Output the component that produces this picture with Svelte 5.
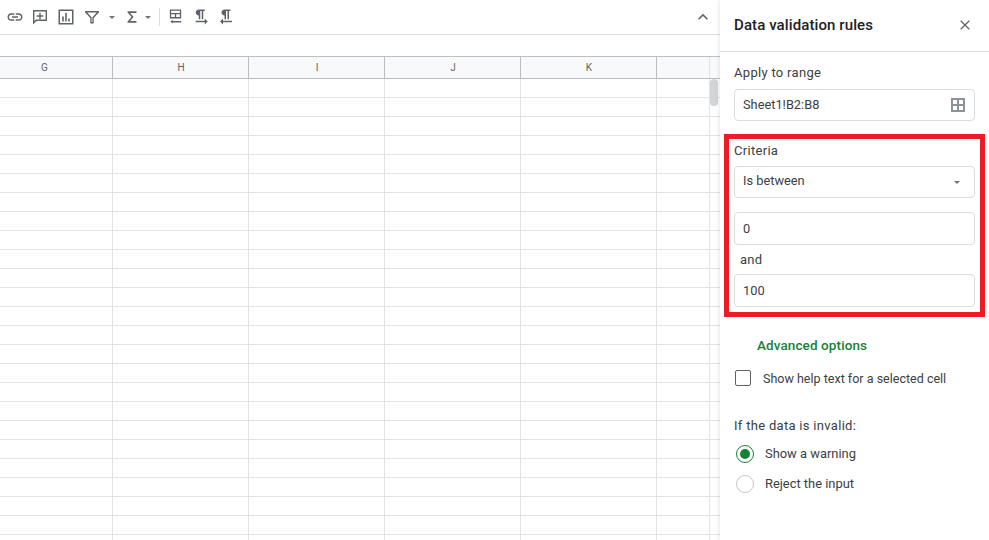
<script lang="ts">
  const columns = ['G', 'H', 'I', 'J', 'K', ''];
  const rowCount = 25;
</script>

<div class="page">
  <div class="sheet">
    <div class="toolbar">
      <svg class="ic link" viewBox="0 0 24 24"><path d="M3.9 12c0-1.71 1.39-3.1 3.1-3.1h4V7H7c-2.76 0-5 2.24-5 5s2.24 5 5 5h4v-1.9H7c-1.71 0-3.1-1.39-3.1-3.1zM8 13h8v-2H8v2zm9-6h-4v1.9h4c1.71 0 3.1 1.39 3.1 3.1s-1.39 3.1-3.1 3.1h-4V17h4c2.76 0 5-2.24 5-5s-2.24-5-5-5z"/></svg>
      <svg class="ic comment" viewBox="0 0 18 18"><path d="M2 2h14v11H5.5L2 16.5zM3.4 3.4v9.7l1.5-1.5h9.7V3.4z"/><path d="M8.3 4.8h1.4v2.5h2.5v1.4H9.7v2.5H8.3V8.700H5.800V7.300h2.500z"/></svg>
      <svg class="ic chart" viewBox="0 0 18 18"><path d="M1.500 1.500h15v15h-15zM3 3v12h12V3z"/><path d="M5.200 8.500h1.600v5H5.200zM8.200 5h1.600v8.500H8.200zM11.200 10.500h1.600v3h-1.600z"/></svg>
      <svg class="ic filter" viewBox="0 0 18 18"><path d="M2 3h14v1.300L10.700 10v5.500H7.300V10L2 4.300zM4.300 4.400l4.300 4.900v4.800h.8V9.300l4.300-4.900z"/></svg>
      <span class="caret first"></span>
      <svg class="ic sigma" viewBox="0 0 18 18"><path d="M4 2.500h10v2H6.900L10.800 9l-3.900 4.500H14v2H4v-1.400L8.500 9 4 3.900z"/></svg>
      <span class="caret second"></span>
      <span class="sep"></span>
      <svg class="ic freeze" viewBox="0 0 18 18"><path d="M3 1h12v9.500H3zM4.400 2.400v2.300h9.200V2.400zm0 3.600v3.100h3.900V6zm5.300 0v3.100h3.900V6z"/><path d="M6 12v1.300h9v1.400H6V16l-2.500-2.300z"/></svg>
      <svg class="ic ltr" viewBox="0 0 24 24"><path d="M9 10v5h2V4h2v11h2V4h2V2H9C6.790 2 5 3.790 5 6s1.790 4 4 4zm12 8l-4-4v3H5v2h12v3l4-4z"/></svg>
      <svg class="ic rtl" viewBox="0 0 24 24"><path d="M10 10v5h2V4h2v11h2V4h2V2h-8C7.790 2 6 3.790 6 6s1.790 4 4 4zm-2 7v-3l-4 4 4 4v-3h12v-2H8z"/></svg>
      <svg class="ic collapse" viewBox="0 0 24 24"><path d="M7.400 15.400 12 10.800l4.600 4.600L18 14l-6-6-6 6z"/></svg>
    </div>
    <div class="formula"></div>
    <div class="grid">
      <div class="head">
        {#each columns as c}
          <div class="hcell">{c}</div>
        {/each}
      </div>
      {#each Array(rowCount) as _}
        <div class="row">
          {#each columns as c}
            <div class="cell" data-col={c}></div>
          {/each}
        </div>
      {/each}
      <div class="thumb"></div>
    </div>
  </div>

  <aside class="panel">
    <header>
      <h2>Data validation rules</h2>
      <svg class="close" viewBox="0 0 14 14"><path d="M2 2l10 10M12 2 2 12"/></svg>
    </header>

    <div class="body">
      <div class="apply">
        <div class="label">Apply to range</div>
        <div class="field range">
          <span>Sheet1!B2:B8</span>
          <svg class="table" viewBox="0 0 16 14"><path d="M1 0h14v14H1zM3 2v4h4V2zm6 0v4h4V2zM3 8v4h4V8zm6 0v4h4V8z"/></svg>
        </div>
      </div>

      <section class="criteria">
        <div class="label">Criteria</div>
        <div class="field select">
          <span>Is between</span>
          <span class="caret small"></span>
        </div>
        <div class="field value">0</div>
        <div class="and">and</div>
        <div class="field value last">100</div>
      </section>

      <div class="advanced">Advanced options</div>

      <div class="check">
        <span class="box"></span>
        <span>Show help text for a selected cell</span>
      </div>

      <div class="label invalid">If the data is invalid:</div>
      <div class="radio first">
        <span class="dot on"></span>
        <span class="text">Show a warning</span>
      </div>
      <div class="radio">
        <span class="dot"></span>
        <span class="text">Reject the input</span>
      </div>
    </div>
  </aside>
</div>

<style>
  :global(body) { margin: 0; background: #fff; }
  .page { display: flex; width: 989px; height: 540px; overflow: hidden; font-family: Roboto, "Liberation Sans", sans-serif; color: #3c4043; }

  .sheet { width: 720px; flex: none; display: flex; flex-direction: column; overflow: hidden; }

  .toolbar { position: relative; height: 34px; flex: none; display: flex; align-items: center; border-bottom: 1px solid #dadce0; box-sizing: content-box; }
  .ic { width: 18px; height: 18px; flex: none; fill: #5f6368; }
  .link { margin-left: 6px; }
  .comment { margin-left: 7px; }
  .chart { margin-left: 8px; }
  .filter { margin-left: 8px; }
  .sigma { margin-left: 9px; width: 16px; height: 18px; }
  .caret { width: 0; height: 0; border-left: 3.500px solid transparent; border-right: 3.500px solid transparent; border-top: 3.500px solid #70757a; flex: none; }
  .caret.first { margin-left: 8px; }
  .caret.second { margin-left: 5px; }
  .sep { width: 1px; height: 18px; background: #dadce0; margin-left: 8px; flex: none; }
  .freeze { margin-left: 7px; width: 17px; }
  .ltr { margin-left: 8px; }
  .rtl { margin-left: 7px; }
  .collapse { margin-left: auto; margin-right: 7px; width: 20px; height: 20px; }

  .formula { height: 21px; flex: none; }

  .grid { position: relative; flex: 1; border-top: 1px solid #c0c0c0; }
  .head, .row { display: flex; }
  .head { height: 22px; background: #f8f9fa; border-bottom: 1px solid #bdbdbd; box-sizing: border-box; }
  .row { height: 19px; border-bottom: 1px solid #e2e3e3; box-sizing: border-box; }
  .hcell, .cell { width: 136px; flex: none; box-sizing: border-box; }
  .hcell:first-child, .cell:first-child { width: 113px; }
  .hcell:first-child { padding-right: 23px; }
  .hcell:not(:first-child) { padding-left: 1px; }
  .hcell:last-child, .cell:last-child { width: 53px; border-right: 1px solid #e2e3e3; }
  .hcell { border-right: 1px solid #bdbdbd; font-size: 10px; line-height: 21px; text-align: center; color: #5f6368; }
  .cell { border-right: 1px solid #e2e3e3; }
  .thumb { position: absolute; left: 710px; top: 22px; width: 8px; height: 27px; border-radius: 4px; background: #d2d4d7; }

  .panel { width: 269px; flex: none; box-shadow: 0 0 5px rgba(60, 64, 67, 0.18); background: #fff; position: relative; }
  header { height: 50px; display: flex; align-items: center; justify-content: space-between; padding: 0 18px 1px 14px; border-bottom: 1px solid #dadce0; box-sizing: content-box; }
  h2 { margin: 0; font-size: 15px; font-weight: 500; color: #202124; letter-spacing: 0.1px; }
  .close { width: 12px; height: 12px; fill: none; stroke: #5f6368; stroke-width: 1.500; }

  .body { display: flex; flex-direction: column; }
  .label { font-size: 13px; font-weight: 400; letter-spacing: 0.3px; line-height: 16px; color: #3c4043; }
  .apply { padding: 13px 14px 0; }
  .field { display: flex; align-items: center; box-sizing: border-box; border: 1px solid #dadce0; border-radius: 4px; padding: 0 8px; font-size: 12.800px; color: #3c4043; }
  .range { margin-top: 8px; height: 32px; justify-content: space-between; padding-bottom: 2px; }
  .table { width: 16px; height: 14px; fill: #8e9296; position: relative; top: 1px; }

  .criteria { margin: 13px 4px 0; height: 183px; box-sizing: border-box; border: 5px solid #ed1c24; padding: 4px 5px 0; }
  .select { margin-top: 7px; height: 32px; justify-content: space-between; padding-bottom: 4px; }
  .caret.small { margin-right: 6px; margin-top: 4px; }
  .value { height: 33px; margin-top: 14px; }
  .and { font-size: 13px; font-weight: 400; letter-spacing: 0.2px; line-height: 16px; margin: 7px 0 6px 6px; }
  .value.last { margin-top: 0; }

  .advanced { margin: 20px 0 0 37px; font-size: 13.500px; font-weight: 500; color: #188038; line-height: 16px; letter-spacing: 0.1px; }
  .check { display: flex; align-items: center; gap: 12px; margin: 17px 0 0 15px; font-size: 12.500px; letter-spacing: 0.01px; }
  .box { width: 16px; height: 16px; box-sizing: border-box; border: 1.500px solid #5f6368; border-radius: 2px; flex: none; }

  .invalid { margin: 32px 0 0 14px; }
  .radio { display: flex; align-items: center; gap: 11px; margin: 12px 0 0 16px; height: 18px; font-size: 12.900px; }
  .radio.first { margin-top: 11px; }
  .text { margin-top: -2px; }
  .dot { position: relative; width: 18px; height: 18px; box-sizing: border-box; border: 1px solid #c4c7c9; border-radius: 50%; flex: none; }
  .dot.on { border-color: #188038; }
  .dot.on::after { content: ''; position: absolute; inset: 3px; border-radius: 50%; background: #188038; }
</style>
